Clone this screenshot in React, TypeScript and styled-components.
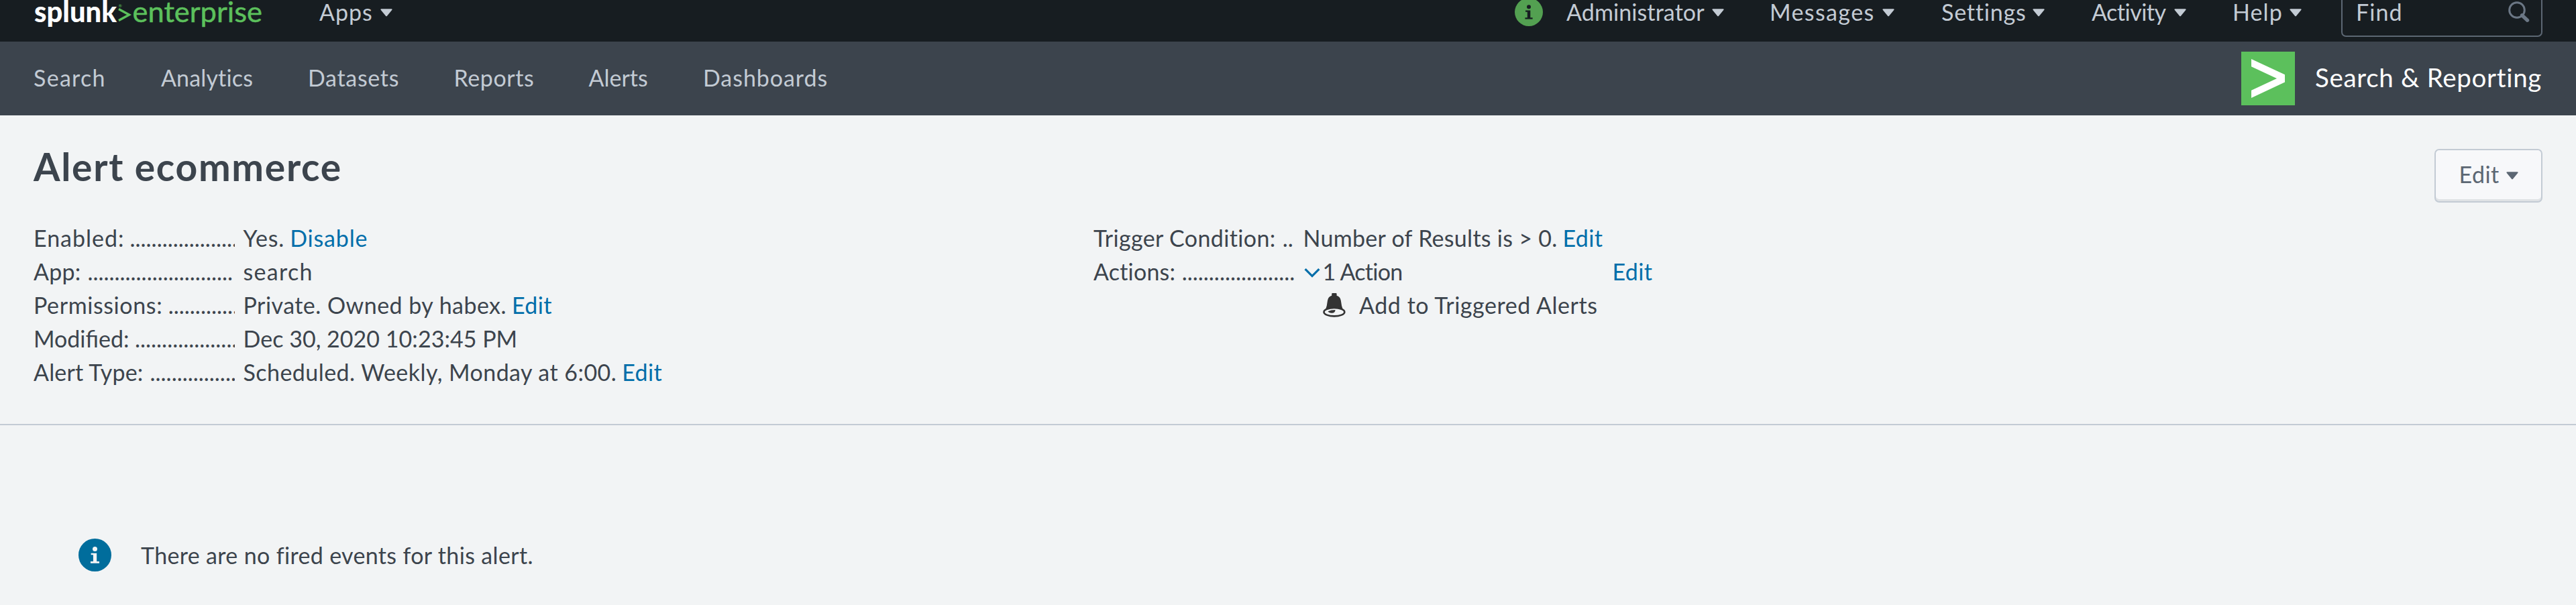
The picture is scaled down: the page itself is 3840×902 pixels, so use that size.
import React from 'react';
import styled, { createGlobalStyle } from 'styled-components';

const GlobalStyle = createGlobalStyle`
  body {
    margin: 0;
    background: #f2f4f5;
    color: #3c444d;
    font-family: Lato, "Liberation Sans", sans-serif;
    font-size: 34px;
    line-height: 50px;
  }
`;

const Page = styled.div`
  height: 902px;
  overflow: hidden;
`;

const Text = styled.span<{ $ls?: number }>`
  letter-spacing: ${(p) => p.$ls ?? 0}px;
  white-space: nowrap;
`;

/* Top bar */

const TopBar = styled.header`
  display: flex;
  align-items: flex-start;
  height: 62px;
  padding: 0 50px;
  box-sizing: border-box;
  background: #171d21;
  color: #c3cbd4;
  line-height: 36px;
`;

const Logo = styled.svg`
  flex: none;
  width: 426px;
  height: 50px;
`;

const TopMenus = styled.nav`
  display: flex;
  align-items: flex-start;
  margin-left: auto;
`;

const MenuItem = styled.div<{ $slot: number }>`
  display: flex;
  width: ${(p) => p.$slot}px;
  flex: none;
`;

const MenuLabel = styled(Text)<{ $width: number }>`
  width: ${(p) => p.$width}px;
  text-align: left;
`;

const CaretSvg = styled.svg<{ $top: number }>`
  flex: none;
  width: 18px;
  height: 12px;
  margin-top: ${(p) => p.$top}px;
`;

const StatusIcon = styled.div`
  width: 77px;
  height: 42px;
  margin-top: -3px;
`;

const FindBox = styled.div`
  display: flex;
  justify-content: space-between;
  width: 300px;
  height: 55px;
  box-sizing: border-box;
  padding: 0 17px 0 20px;
  border: 2px solid #5c6773;
  border-top: 0;
  border-radius: 0 0 7px 7px;
`;

/* Application bar */

const AppBar = styled.div`
  display: flex;
  justify-content: space-between;
  height: 110px;
  padding: 0 50px;
  background: #3c444d;
  color: #c3cbd4;
`;

const AppNav = styled.nav`
  display: flex;
  align-items: center;
  padding-bottom: 2px;
`;

const NavItem = styled(Text)<{ $slot: number }>`
  width: ${(p) => p.$slot}px;
`;

const AppBrand = styled.div`
  display: flex;
  align-items: center;
  color: #fff;
  font-size: 38.5px;
`;

const BrandName = styled(Text)`
  width: 339px;
  margin-left: 30px;
  padding-bottom: 4px;
`;

/* Alert summary */

const Summary = styled.section`
  height: 462px;
  box-sizing: border-box;
  padding: 45px 50px 0;
  border-bottom: 2px solid #c3cbd4;
`;

const TitleRow = styled.div`
  display: flex;
  justify-content: space-between;
  align-items: flex-start;
  height: 113px;
`;

const Title = styled.h1`
  margin: 0;
  font-size: 57px;
  line-height: 62px;
  font-weight: 700;
  letter-spacing: 1.7px;
`;

const EditButton = styled.button`
  display: flex;
  align-items: center;
  width: 161px;
  height: 80px;
  box-sizing: border-box;
  margin: 5px 0 0;
  padding: 0 0 4px 34.5px;
  border: 2px solid #c3cbd4;
  border-radius: 7px;
  background: #f7f8fa;
  box-shadow: inset 0 -3px 0 #dfe2e5;
  color: #5c6773;
  font: inherit;
`;

const Details = styled.div`
  display: grid;
  grid-template-columns: 1580px 1fr;
`;

const Row = styled.div`
  display: grid;
  grid-template-columns: 300px 1fr;
  column-gap: 12px;
  height: 50px;
`;

const Term = styled.div`
  display: flex;
  overflow: hidden;
  white-space: nowrap;
`;

const Leader = styled.span<{ $gap?: number }>`
  margin-left: ${(p) => p.$gap ?? 8.5}px;
`;

const Value = styled.div`
  display: flex;
  padding-left: 0.5px;
  white-space: nowrap;
`;

const Link = styled.a<{ $ls?: number; $gap?: number }>`
  margin-left: ${(p) => p.$gap ?? 8}px;
  letter-spacing: ${(p) => p.$ls ?? 0.4}px;
  color: #006eaa;
`;

const ActionToggle = styled.div`
  display: flex;
  width: 461px;
`;

const ToggleIcon = styled.svg`
  flex: none;
  width: 29px;
  height: 50px;
`;

const ActionEntry = styled.div`
  display: flex;
  padding-left: 342px;
  height: 50px;
`;

const BellIcon = styled.svg`
  flex: none;
  width: 34px;
  height: 36px;
  margin: 7px 20px 0 0;
`;

/* Empty state */

const EmptyState = styled.section`
  display: flex;
  align-items: center;
  height: 49px;
  padding: 169px 0 0 117px;
  gap: 44px;
`;

const InfoSvg = styled.svg`
  display: block;
  flex: none;
`;

function Caret({ top, color = '#c3cbd4' }: { top: number; color?: string }) {
  return (
    <CaretSvg $top={top} viewBox="0 0 18 12">
      <path d="M1.6 0.3H16.4Q18.3 0.5 17.2 2L10 10.8Q9 11.9 8 10.8L0.8 2Q-0.3 0.5 1.6 0.3Z" fill={color} />
    </CaretSvg>
  );
}

function InfoIcon({ size, color, mark }: { size: number; color: string; mark: string }) {
  return (
    <InfoSvg width={size} height={size} viewBox="0 0 42 42">
      <circle cx="21" cy="21" r="21" fill={color} />
      <circle cx="21" cy="13.2" r="3" fill={mark} />
      <path d="M16 18.6H23.3V29.2H26.6V31.4H15.4V29.2H18.8V20.8H16Z" fill={mark} />
    </InfoSvg>
  );
}

const menus = [
  { label: 'Administrator', ls: 0.1, width: 217, slot: 303 },
  { label: 'Messages', ls: 1.4, width: 168, slot: 256 },
  { label: 'Settings', ls: 0.79, width: 136, slot: 224 },
  { label: 'Activity', ls: -0.5, width: 123, slot: 210 },
  { label: 'Help', ls: 1.1, width: 84.5, slot: 162 },
];

const navItems = [
  { label: 'Search', ls: 1.3, slot: 190 },
  { label: 'Analytics', ls: 0.15, slot: 219 },
  { label: 'Datasets', ls: 0.68, slot: 217.5 },
  { label: 'Reports', ls: 0.58, slot: 201 },
  { label: 'Alerts', ls: 0, slot: 170.5 },
  { label: 'Dashboards', ls: 0.95, slot: 190 },
];

const leftRows = [
  { term: 'Enabled:', tls: 0.99, dots: 20, gap: 8, value: 'Yes.', vls: 0.9, link: 'Disable', lls: 0.8 },
  { term: 'App:', tls: 0.2, dots: 27, gap: 10, value: 'search', vls: 1.3 },
  { term: 'Permissions:', tls: 0.6, dots: 13, gap: 8.5, value: 'Private. Owned by habex.', vls: 0.46, link: 'Edit' },
  { term: 'Modified:', tls: 0, dots: 19, gap: 8.5, value: 'Dec 30, 2020 10:23:45 PM', vls: 0.03 },
  { term: 'Alert Type:', tls: 0.2, dots: 16, gap: 10, value: 'Scheduled. Weekly, Monday at 6:00.', vls: 0.45, link: 'Edit' },
];

export default function App() {
  return (
    <Page>
      <GlobalStyle />
      <TopBar>
        <Logo viewBox="50 0 426 50" fontFamily="Lato, sans-serif" fontSize="43">
          <text x="51" y="33" fill="#fff" fontWeight="900" textLength="123" lengthAdjust="spacingAndGlyphs">splunk</text>
          <path d="M177 13.6L192.5 22L177 30.4" fill="none" stroke="#5cc05c" strokeWidth="3.4" />
          <text x="176.6" y="11" fontSize="6.5" fill="#5cc05c">®</text>
          <text x="197.5" y="33" fill="#5cc05c" stroke="#5cc05c" strokeWidth="0.5" textLength="193.5" lengthAdjust="spacingAndGlyphs">enterprise</text>
        </Logo>
        <MenuItem $slot={110}>
          <MenuLabel $width={90.5} $ls={0.98}>Apps</MenuLabel>
          <Caret top={13} />
        </MenuItem>
        <TopMenus>
          <StatusIcon><InfoIcon size={42} color="#53a051" mark="#171d21" /></StatusIcon>
          {menus.map((m) => (
            <MenuItem key={m.label} $slot={m.slot}>
              <MenuLabel $width={m.width} $ls={m.ls}>{m.label}</MenuLabel>
              <Caret top={13} />
            </MenuItem>
          ))}
          <FindBox>
            <Text $ls={1.07}>Find</Text>
            <svg width="34" height="36" viewBox="0 0 34 36">
              <circle cx="15" cy="15" r="11.3" fill="none" stroke="#6b7785" strokeWidth="3" />
              <path d="M22.5 22.8L30.5 30.2" stroke="#6b7785" strokeWidth="5.4" strokeLinecap="round" />
            </svg>
          </FindBox>
        </TopMenus>
      </TopBar>

      <AppBar>
        <AppNav>
          {navItems.map((n) => (
            <NavItem key={n.label} $slot={n.slot} $ls={n.ls}>{n.label}</NavItem>
          ))}
        </AppNav>
        <AppBrand>
          <svg width="80" height="80" viewBox="0 0 80 80">
            <rect width="80" height="80" fill="#5cc05c" />
            <path d="M15 11L65 34.3V45.5L15 69V57.8L53 40L15 22.2Z" fill="#fff" />
          </svg>
          <BrandName $ls={0.69}>Search &amp; Reporting</BrandName>
        </AppBrand>
      </AppBar>

      <Summary>
        <TitleRow>
          <Title>Alert ecommerce</Title>
          <EditButton>
            <MenuLabel $width={70} $ls={0.46}>Edit</MenuLabel>
            <Caret top={3} color="#5c6773" />
          </EditButton>
        </TitleRow>
        <Details>
          <div>
            {leftRows.map((r) => (
              <Row key={r.term}>
                <Term>
                  <Text $ls={r.tls}>{r.term}</Text>
                  <Leader $gap={r.gap}>{'.'.repeat(r.dots)}</Leader>
                </Term>
                <Value>
                  <Text $ls={r.vls}>{r.value}</Text>
                  {r.link && <Link $ls={r.lls}>{r.link}</Link>}
                </Value>
              </Row>
            ))}
          </div>
          <div>
            <Row>
              <Term>
                <Text $ls={0.36}>Trigger Condition:</Text>
                <Leader $gap={10}>..</Leader>
              </Term>
              <Value>
                <Text $ls={0.28}>Number of Results is &gt; 0.</Text>
                <Link>Edit</Link>
              </Value>
            </Row>
            <Row>
              <Term>
                <Text $ls={0.2}>Actions:</Text>
                <Leader $gap={9.5}>{'.'.repeat(21)}</Leader>
              </Term>
              <Value>
                <ActionToggle>
                  <ToggleIcon viewBox="0 0 29 50">
                    <path d="M2.6 21.2L13 31.6L23.4 21.2" fill="none" stroke="#006eaa" strokeWidth="3.2" />
                  </ToggleIcon>
                  <Text $ls={-0.7}>1 Action</Text>
                </ActionToggle>
                <Link $gap={0}>Edit</Link>
              </Value>
            </Row>
            <ActionEntry>
              <BellIcon viewBox="0 0 34 36">
                <path d="M13.2 3.8V1.2Q13.2 0 14.4 0H19.4Q20.6 0 20.6 1.2V3.8Q25.8 5 26.8 11Q27.6 19 30 25H3.8Q6.2 19 7 11Q8 5 13.2 3.8Z" fill="#333" />
                <ellipse cx="16.9" cy="28.2" rx="15.4" ry="6.2" fill="#f2f4f5" stroke="#333" strokeWidth="2.6" />
                <path d="M7.5 27.2Q12 25 18.5 25Q18.5 29.8 13.2 29.8Q9 29.6 7.5 27.2Z" fill="#333" />
              </BellIcon>
              <Text $ls={0.55}>Add to Triggered Alerts</Text>
            </ActionEntry>
          </div>
        </Details>
      </Summary>

      <EmptyState>
        <InfoIcon size={49} color="#006d9c" mark="#f2f4f5" />
        <Text $ls={0.34}>There are no fired events for this alert.</Text>
      </EmptyState>
    </Page>
  );
}
